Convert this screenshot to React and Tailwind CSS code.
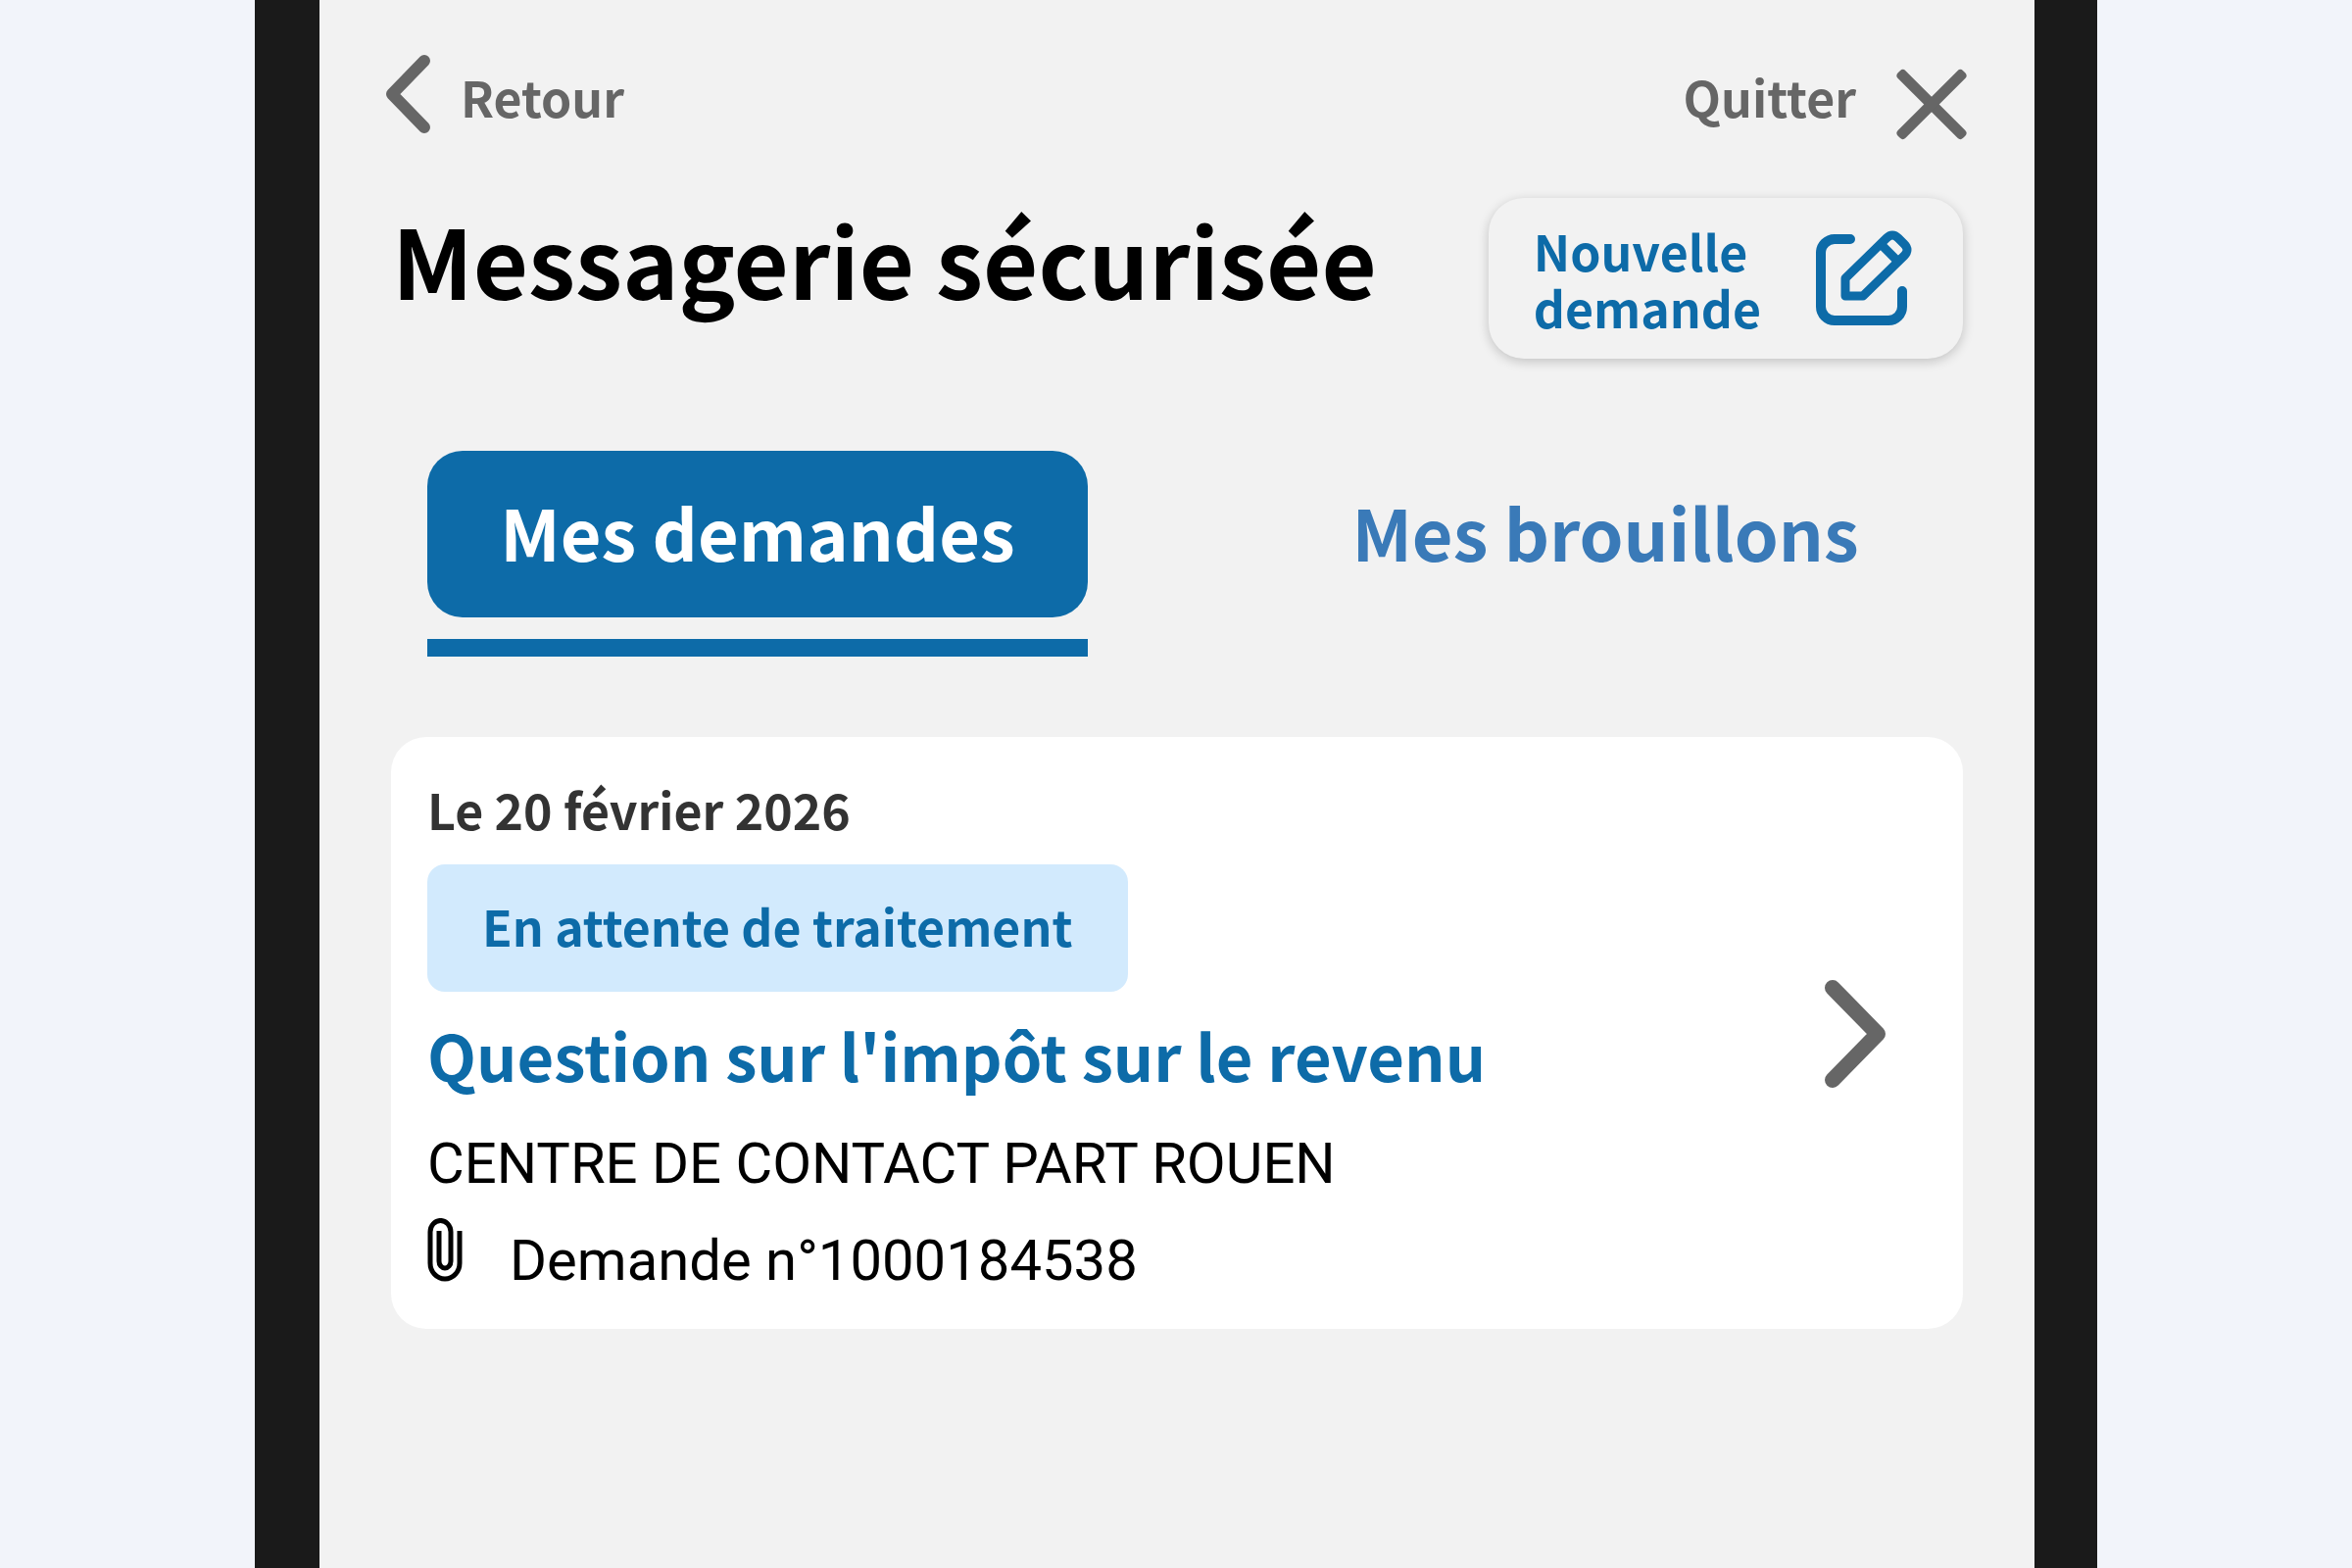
function BackIcon() {
  return (
    <svg aria-hidden="true" width="46" height="82" viewBox="0 0 46 82" fill="none" stroke="#666" strokeWidth="12" strokeLinecap="round" strokeLinejoin="round">
      <path d="M39 7 L6 41 L39 75" />
    </svg>
  );
}

function CloseIcon() {
  return (
    <svg aria-hidden="true" width="74" height="96" viewBox="0 0 74 96" fill="#666">
      <rect x="-10" y="53" width="94" height="11" rx="4" transform="rotate(45 37 58.500)" />
      <rect x="-10" y="53" width="94" height="11" rx="4" transform="rotate(-45 37 58.500)" />
    </svg>
  );
}

function ComposeIcon() {
  return (
    <svg aria-hidden="true" width="98" height="98" viewBox="0 0 98 98" fill="none" stroke="#0d6ba8" strokeWidth="10" strokeLinecap="round" strokeLinejoin="round">
      <path d="M35 9 H19 a14 14 0 0 0 -14 14 V78 a14 14 0 0 0 14 14 H74 a14 14 0 0 0 14 -14 V62" />
      <path d="M30 67 V49 L72 8 q6 -6 12 0 l6 6 q6 6 0 12 L48 67 Z" strokeWidth="9" />
      <path d="M66 14 L84 32" strokeWidth="9" strokeLinecap="butt" />
    </svg>
  );
}

function NextIcon() {
  return (
    <svg aria-hidden="true" className="mb-4 shrink-0" width="64" height="112" viewBox="0 0 64 112" fill="none" stroke="#666" strokeWidth="16" strokeLinecap="round" strokeLinejoin="round">
      <path d="M9 9 L55 56 L9 103" />
    </svg>
  );
}

function ClipIcon() {
  return (
    <svg aria-hidden="true" width="36" height="66" viewBox="0 0 36 66" fill="none" stroke="#000" strokeWidth="5">
      <path d="M33 13 V46 a15 16 0 0 1 -30 0 V14 a10 11 0 0 1 21 0 V44 a6 7 0 0 1 -12 0 V13" />
    </svg>
  );
}

export default function App() {
  return (
    <div className="min-h-screen bg-[#f2f4fa] px-[260px] font-['Noto_Sans_CJK_SC','Noto_Sans',sans-serif]">
      <div className="min-h-screen border-r-[64px] border-l-[66px] border-[#1a1a1a] bg-[#f2f2f2] pt-12 pr-[68px] pl-[68px]">
        <header className="flex items-center justify-between text-[50px] leading-[72px] font-semibold text-[#666]">
          <a href="#retour" className="flex items-center gap-[30px]">
            <BackIcon />
            <span className="pt-1">Retour</span>
          </a>
          <a href="#quitter" className="flex items-center gap-10">
            <span className="pt-1">Quitter</span>
            <CloseIcon />
          </a>
        </header>

        <main>
          <div className="mt-[58px] flex items-start justify-between pr-[5px] pl-[6px]">
            <h1 className="text-[97px] leading-[124px] font-semibold text-black">Messagerie sécurisée</h1>
            <button
              type="button"
              className="flex h-[164px] items-center gap-14 rounded-[36px] bg-[#f2f2f2] pr-[52px] pl-[46px] text-left text-[50px] leading-[58px] font-semibold text-[#0d6ba8] shadow-[0_3px_12px_rgba(0,0,0,0.2)]"
            >
              <span className="pb-px">
                Nouvelle
                <br />
                demande
              </span>
              <ComposeIcon />
            </button>
          </div>

          <nav className="mt-[94px] flex justify-between pr-[33px] pl-[42px] text-center text-[72px] leading-[164px] font-semibold">
            <a href="#demandes" aria-current="page" className="w-[674px] text-white">
              <span className="block rounded-[36px] bg-[#0d6ba8] pb-[6px]">Mes demandes</span>
              <span className="mt-[22px] block h-[18px] bg-[#0d6ba8]" />
            </a>
            <a href="#brouillons" className="w-[674px] text-[#3a7ab8]">
              Mes brouillons
            </a>
          </nav>

          <a
            href="#demande-1000184538"
            className="mt-[82px] mr-[5px] ml-[5px] flex items-center justify-between rounded-[36px] bg-white pt-[37px] pr-[78px] pb-5 pl-[37px]"
          >
            <article>
              <p className="text-[50px] leading-[72px] font-semibold text-[#333]">Le 20 février 2026</p>
              <p className="mt-[21px] w-fit rounded-[18px] bg-[#d2eafd] px-14 pb-[6px] text-[50px] leading-[124px] font-semibold text-[#0d6ba8]">
                En attente de traitement
              </p>
              <h2 className="mt-5 text-[65px] leading-[88px] font-semibold text-[#0d6ba8]">
                Question sur l'impôt sur le revenu
              </h2>
              <div className="mt-[18px] font-[Roboto,sans-serif] text-[58px] leading-[99px] text-black">
                <p>CENTRE DE CONTACT PART ROUEN</p>
                <p className="flex items-start gap-12">
                  <span className="pt-[6px]">
                    <ClipIcon />
                  </span>
                  Demande n°1000184538
                </p>
              </div>
            </article>
            <NextIcon />
          </a>
        </main>
      </div>
    </div>
  );
}
